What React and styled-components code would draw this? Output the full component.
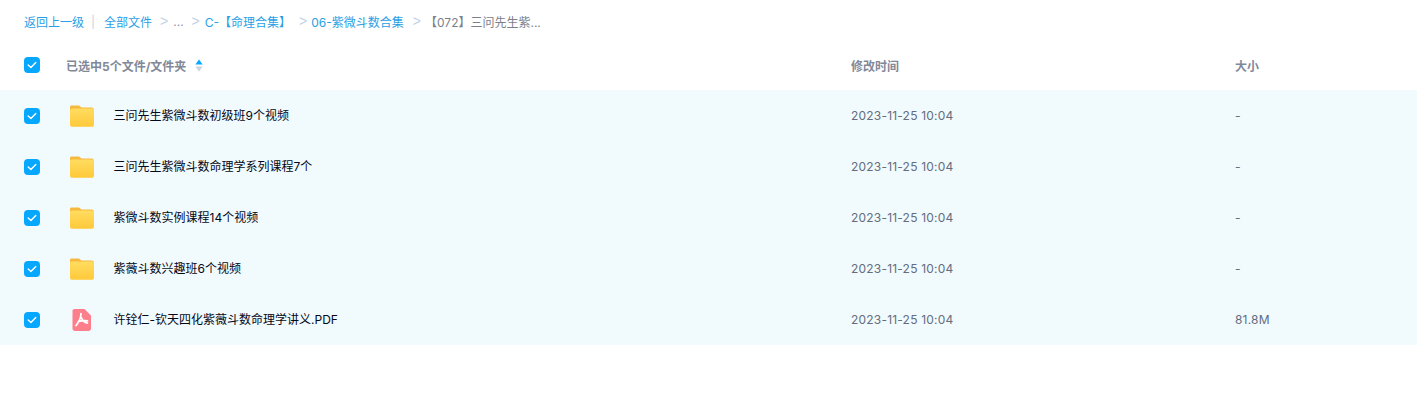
import React from "react";
import styled, { createGlobalStyle } from "styled-components";

const Global = createGlobalStyle`
  html, body { margin: 0; padding: 0; background: #fff; }
  body { font-family: Inter, "Noto Sans CJK SC", sans-serif; }
`;

const Page = styled.div`
  width: 1417px;
  height: 415px;
  overflow: hidden;
  background: #fff;
`;

const Crumbs = styled.nav`
  display: flex;
  align-items: center;
  height: 42px;
  padding-left: 24px;
  font-size: 12px;
  color: #8d939e;
`;

const CrumbLink = styled.span`
  color: #2a9fe6;
  white-space: nowrap;
`;

const CrumbCurrent = styled.span`
  color: #7b818c;
  white-space: nowrap;
`;

const Pipe = styled.span`
  color: #c6d4e2;
  margin: 0 9px 0 7px;
`;

const Sep = styled.span`
  color: #c2d2e6;
  font-size: 14px;
  margin: ${(p) => p.$margin || "0 5px 0 7px"};
  font-family: "Liberation Sans", sans-serif;
`;

const Row = styled.div`
  display: grid;
  grid-template-columns: 24px 18px 24px 48px 737px 384px 1fr;
  align-items: center;
  height: ${(p) => (p.$head ? "46px" : "51px")};
  margin-bottom: ${(p) => (p.$head ? "2px" : "0")};
  background: ${(p) => (p.$head ? "#fff" : "#f1fafd")};
`;

const Box = styled.span`
  grid-column: 2;
  width: 16px;
  height: 16px;
  border-radius: 4px;
  background: #06a7ff;
  display: flex;
  align-items: center;
  justify-content: center;
`;

const HeadName = styled.div`
  grid-column: 3 / span 3;
  padding-left: 24px;
  display: flex;
  align-items: center;
  font-size: 12px;
  font-weight: 700;
  color: #818999;
`;

const Sort = styled.svg`
  margin-left: 9px;
`;

const HeadCell = styled.div`
  font-size: 12px;
  font-weight: 700;
  color: #818999;
`;

const IconCell = styled.div`
  grid-column: 4;
  display: flex;
  align-items: center;
  padding-left: ${(p) => (p.$pdf ? "6px" : "3px")};
`;

const Name = styled.div`
  font-size: 12px;
  color: #03081a;
  white-space: nowrap;
  margin-top: -3px;
  margin-left: -0.5px;
`;

const Cell = styled.div`
  font-size: 12px;
  letter-spacing: 0.2px;
  color: #636d7e;
  white-space: nowrap;
  margin-top: -1px;
`;

const Check = () => (
  <Box>
    <svg width="10" height="8" viewBox="0 0 10 8" fill="none">
      <path d="M1.2 4.1 L3.9 6.6 L8.8 1.4" stroke="#fff" strokeWidth="1.4" strokeLinecap="round" strokeLinejoin="round" />
    </svg>
  </Box>
);

const Folder = () => (
  <svg width="26" height="24" viewBox="0 0 26 24">
    <path d="M2.5 1.5H9.5C10.8 1.5 11.4 3.4 13 3.4H22.6C24 3.4 25 4.4 25 5.8V10H1V3C1 2.2 1.7 1.5 2.5 1.5Z" fill="#f5b93f" />
    <path d="M3 4.6H23C24.2 4.6 25 5.4 25 6.6V20.4C25 21.8 24 22.8 22.6 22.8H3.4C2 22.8 1 21.8 1 20.4V6.6C1 5.4 1.8 4.6 3 4.6Z" fill="url(#fg)" />
    <defs>
      <linearGradient id="fg" x1="0" y1="0" x2="0" y2="1">
        <stop offset="0" stopColor="#ffdc60" />
        <stop offset="1" stopColor="#ffc93a" />
      </linearGradient>
    </defs>
  </svg>
);

const Pdf = () => (
  <svg width="20" height="24" viewBox="0 0 20 24">
    <path d="M2.5 1H12.5L19 7.5V20.5C19 22 18 23 16.5 23H3C1.5 23 0.5 22 0.5 20.5V3C0.5 1.8 1.3 1 2.5 1Z" fill="#fd7f8b" />
    <path
      d="M9 5.5C8.9 9 7.4 13.6 4 17.6M9.3 9.5C10.2 12.2 12.2 14.6 15.5 15.2M6 13.8C8.5 12.9 12 12.2 15.5 12.8"
      fill="none"
      stroke="#fff"
      strokeWidth="1.7"
      strokeLinecap="round"
    />
  </svg>
);

const rows = [
  { name: "三问先生紫微斗数初级班9个视频", size: "-" },
  { name: "三问先生紫微斗数命理学系列课程7个", size: "-" },
  { name: "紫微斗数实例课程14个视频", size: "-" },
  { name: "紫薇斗数兴趣班6个视频", size: "-" },
  { name: "许铨仁-钦天四化紫薇斗数命理学讲义.PDF", size: "81.8M", pdf: true },
];

export default function App() {
  return (
    <Page>
      <Global />
      <Crumbs>
        <CrumbLink>返回上一级</CrumbLink>
        <Pipe>|</Pipe>
        <CrumbLink>全部文件</CrumbLink>
        <Sep $margin="0 5px 0 8px">&gt;</Sep>
        <span>...</span>
        <Sep $margin="0 5px 0 8px">&gt;</Sep>
        <CrumbLink>C-【命理合集】</CrumbLink>
        <Sep $margin="0 4px 0 8px">&gt;</Sep>
        <CrumbLink>06-紫微斗数合集</CrumbLink>
        <Sep $margin="0 4px 0 9px">&gt;</Sep>
        <CrumbCurrent>【072】三问先生紫...</CrumbCurrent>
      </Crumbs>
      <Row $head>
        <Check />
        <HeadName>
          已选中5个文件/文件夹
          <Sort width="8" height="13" viewBox="0 0 8 13">
            <path d="M4 0.5 L7.6 5.5 H0.4 Z" fill="#06a7ff" />
            <path d="M4 12.5 L7.6 7.5 H0.4 Z" fill="#c9d3e2" />
          </Sort>
        </HeadName>
        <HeadCell>修改时间</HeadCell>
        <HeadCell>大小</HeadCell>
      </Row>
      {rows.map((r) => (
        <Row key={r.name}>
          <Check />
          <IconCell $pdf={r.pdf}>{r.pdf ? <Pdf /> : <Folder />}</IconCell>
          <Name>{r.name}</Name>
          <Cell>2023-11-25 10:04</Cell>
          <Cell>{r.size}</Cell>
        </Row>
      ))}
    </Page>
  );
}
